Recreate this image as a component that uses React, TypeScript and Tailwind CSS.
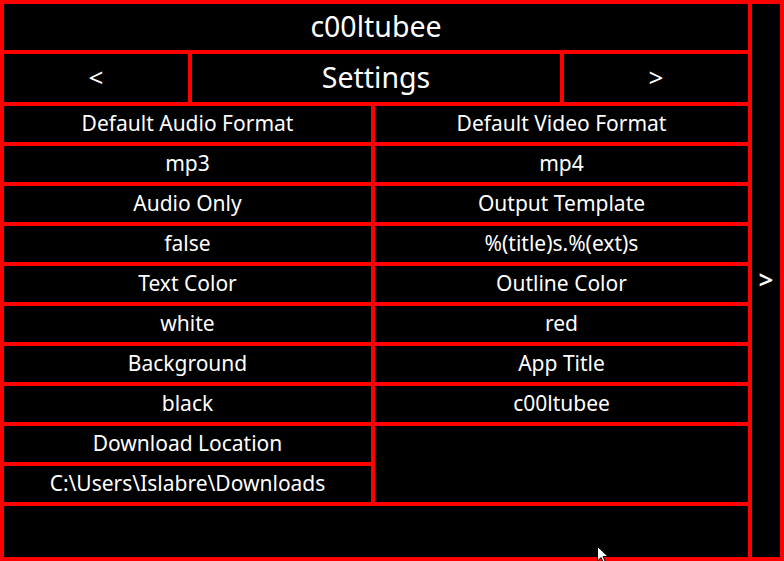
import React from 'react';

const rows: [string, string | null][] = [
  ['Default Audio Format', 'Default Video Format'],
  ['mp3', 'mp4'],
  ['Audio Only', 'Output Template'],
  ['false', '%(title)s.%(ext)s'],
  ['Text Color', 'Outline Color'],
  ['white', 'red'],
  ['Background', 'App Title'],
  ['black', 'c00ltubee'],
  ['Download Location', null],
  ['C:\\Users\\Islabre\\Downloads', null],
];

function Cell({ children, className = '' }: { children?: React.ReactNode; className?: string }) {
  return (
    <div className={`bg-black flex items-center justify-center text-white ${className}`}>
      {children}
    </div>
  );
}

export default function App() {
  return (
    <div
      className="relative w-[784px] h-[561px] bg-[#ff0000] p-1 flex gap-1 overflow-hidden"
      style={{ fontFamily: '"Noto Sans", "Open Sans", sans-serif' }}
    >
      {/* main column */}
      <div className="w-[744px] flex flex-col gap-1">
        <Cell className="h-[46px] text-[28.5px] pb-[2px]">c00ltubee</Cell>
        <div className="h-[48px] grid grid-cols-[184px_368px_184px] gap-1">
          <Cell className="text-[26px] pb-[2px]">&lt;</Cell>
          <Cell className="text-[28.5px] pb-[2px]">Settings</Cell>
          <Cell className="text-[26px] pb-[2px]">&gt;</Cell>
        </div>
        <div className="grid grid-cols-[367px_373px] grid-rows-[repeat(10,36px)] gap-1 text-[21px]">
          {rows.map(([left, right], i) => (
            <React.Fragment key={i}>
              <Cell className="pb-[1px]">{left}</Cell>
              {right !== null && <Cell className="pb-[1px]">{right}</Cell>}
              {right === null && i === 8 && <Cell className="row-span-2" />}
            </React.Fragment>
          ))}
        </div>
        <Cell className="flex-1" />
      </div>

      {/* side toggle */}
      <div className="w-[28px] bg-black flex items-center justify-center text-white text-[26px] font-semibold pb-[2px]">
        &gt;
      </div>

      {/* mouse pointer */}
      <svg className="absolute left-[597px] top-[546px]" width="12" height="18" viewBox="0 0 12 18">
        <path d="M0.5 0.5 L0.5 15 L4 11.5 L6.5 17 L8.5 16 L6 10.5 L11 10.5 Z" fill="#fff" stroke="#000" strokeWidth="1" />
      </svg>
    </div>
  );
}
